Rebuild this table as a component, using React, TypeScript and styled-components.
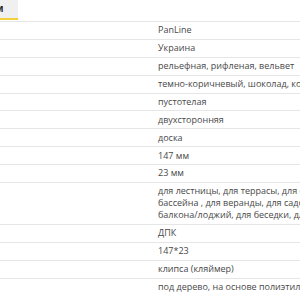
import styled, { createGlobalStyle } from "styled-components"

const GlobalStyle = createGlobalStyle`
  html, body {
    margin: 0;
    padding: 0;
    background: #ffffff;
    overflow: hidden;
  }
  body {
    font-family: "Open Sans", "Liberation Sans", sans-serif;
    color: #444444;
  }
`

const rows: { label: string; lines: string[] }[] = [
  { label: "Производитель", lines: ["PanLine"] },
  { label: "Страна", lines: ["Украина"] },
  { label: "Поверхность", lines: ["рельефная, рифленая, вельвет"] },
  { label: "Цвет", lines: ["темно-коричневый, шоколад, коричневый, серый"] },
  { label: "Тип", lines: ["пустотелая"] },
  { label: "Сторонность", lines: ["двухсторонняя"] },
  { label: "Вид", lines: ["доска"] },
  { label: "Ширина", lines: ["147 мм"] },
  { label: "Толщина", lines: ["23 мм"] },
  {
    label: "Назначение",
    lines: [
      "для лестницы, для террасы, для старта",
      "бассейна , для веранды, для садовых дорожек,",
      "балкона/лоджий, для беседки, для пирса",
    ],
  },
  { label: "Материал", lines: ["ДПК"] },
  { label: "Размер", lines: ["147*23"] },
  { label: "Крепление", lines: ["клипса (кляймер)"] },
  { label: "Особенности", lines: ["под дерево, на основе полиэтилена"] },
]

const Page = styled.div`
  width: 300px;
  height: 300px;
  overflow: hidden;
`

const Tabs = styled.div`
  display: flex;
  height: 21px;
  margin-left: -5px;
`

const Tab = styled.div`
  box-sizing: border-box;
  width: 23px;
  height: 20px;
  padding: 3px 0 0 0;
  background: #f0f0f0;
  border-bottom: 2px solid #f3cf3c;
  font-size: 9px;
  font-weight: 700;
  line-height: 12px;
  color: #222222;
`

const Table = styled.div`
  display: flex;
  flex-direction: column;
  width: 300px;
`

const Row = styled.div`
  display: grid;
  grid-template-columns: 158px 1fr;
  border-top: 1px solid #e6e6e6;
  overflow: hidden;
`

const Label = styled.div`
  padding: 2.4px 0;
  font-size: 9px;
  line-height: 12.1px;
  color: #ffffff;
  white-space: nowrap;
  overflow: hidden;
`

const Value = styled.div`
  padding: 2.4px 0;
  font-size: 9px;
  line-height: 12.1px;
  color: #484848;
  white-space: nowrap;
`

const Line = styled.div``

export default function App() {
  return (
    <>
      <GlobalStyle />
      <Page>
        <Tabs>
          <Tab>М</Tab>
        </Tabs>
        <Table>
          {rows.map((r) => (
            <Row key={r.label}>
              <Label>{r.label}</Label>
              <Value>
                {r.lines.map((l) => (
                  <Line key={l}>{l}</Line>
                ))}
              </Value>
            </Row>
          ))}
        </Table>
      </Page>
    </>
  )
}
